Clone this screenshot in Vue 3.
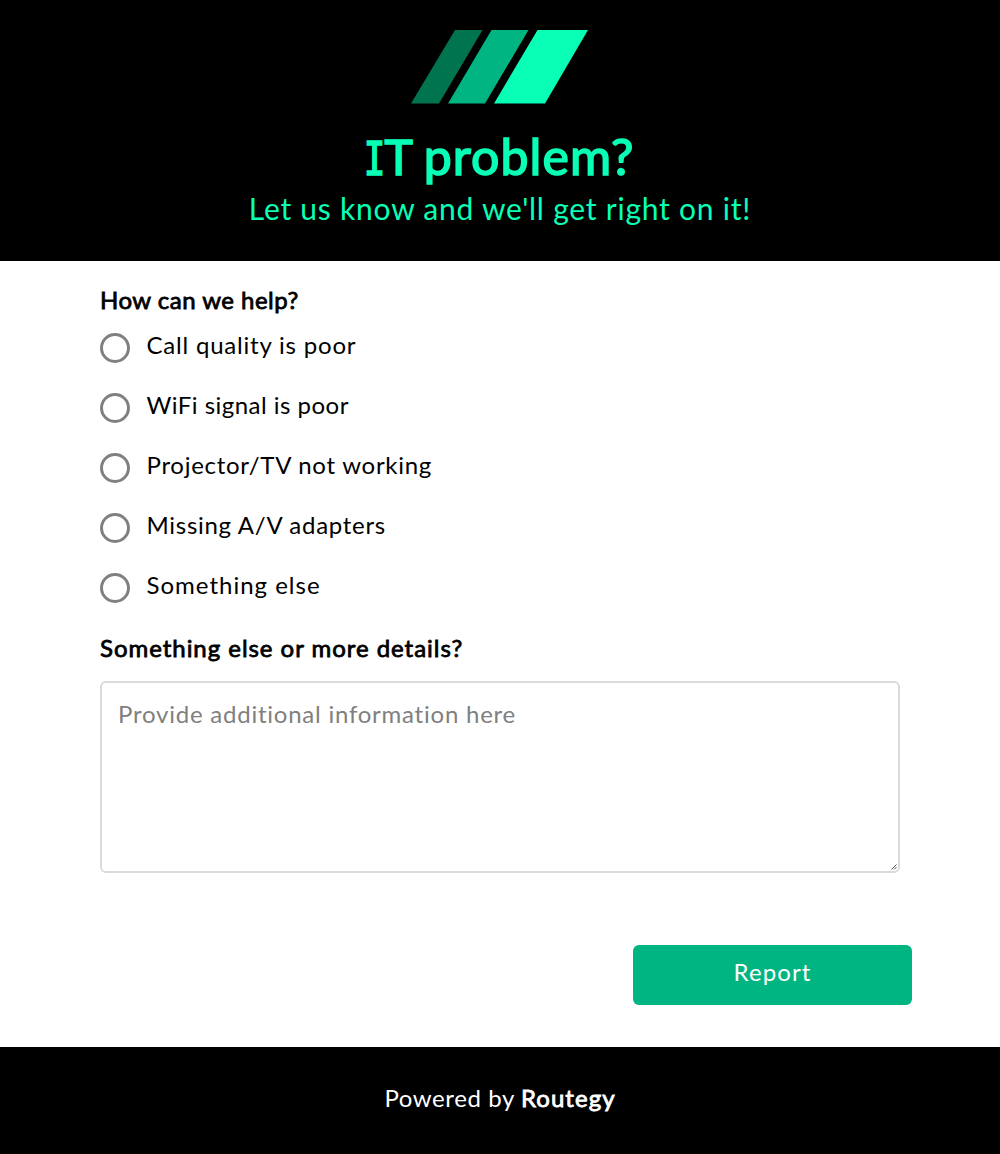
<script setup>
import { ref } from 'vue'

const options = [
  { label: 'Call quality is poor', spacing: 0.8 },
  { label: 'WiFi signal is poor', spacing: 0.48 },
  { label: 'Projector/TV not working', spacing: 0.72 },
  { label: 'Missing A/V adapters', spacing: 0.71 },
  { label: 'Something else', spacing: 1 },
]
const selected = ref('')
const details = ref('')
</script>

<template>
  <div class="page">
    <header class="header">
      <svg class="logo" width="178" height="74" viewBox="0 0 178 74">
        <path d="M44 0H71.500L28 73.500H0Z" fill="#00734f" />
        <path d="M80.500 0H117.500L74 73.500H37Z" fill="#00b582" />
        <path d="M126.500 0H177L134 73.500H83Z" fill="#08ffb5" />
      </svg>
      <h1 class="title"><span class="serif-i">I</span><span class="title-t">T&nbsp;</span><span class="title-rest">problem?</span></h1>
      <p class="subtitle">Let us know and we'll get right on it!</p>
    </header>
    <main class="form">
      <h2 class="question q1">How can we help?</h2>
      <div class="options">
        <label v-for="o in options" :key="o.label" class="option">
          <input v-model="selected" class="radio" type="radio" name="problem" :value="o.label" />
          <span class="option-text" :style="{ letterSpacing: o.spacing + 'px' }">{{ o.label }}</span>
        </label>
      </div>
      <h2 class="question q2">Something else or more details?</h2>
      <div class="details-box">
        <textarea v-model="details" class="details" placeholder="Provide additional information here"></textarea>
        <svg class="grip" width="6" height="6" viewBox="0 0 6 6">
          <path d="M0.500 5.500L5.500 0.500M3 5.500L5.500 3" stroke="#555" stroke-width="1" />
        </svg>
      </div>
      <button class="report" type="button">Report</button>
    </main>
    <footer class="footer"><span class="powered">Powered by</span><span class="brand">Routegy</span></footer>
  </div>
</template>

<style>
body { margin: 0; background: #fff; }
</style>

<style scoped>
.page {
  display: flex;
  flex-direction: column;
  height: 1154px;
  font-family: Lato, "Liberation Sans", sans-serif;
  font-size: 24px;
  line-height: 30px;
  color: #000;
  white-space: nowrap;
}
.header {
  box-sizing: border-box;
  display: flex;
  flex-direction: column;
  align-items: center;
  height: 261px;
  padding-top: 30px;
  background: #000;
  color: #08ffb5;
}
.logo { display: block; }
.title {
  height: 60px;
  margin: 22px 0 0;
  font-size: 48px;
  line-height: 60px;
  font-weight: 400;
  display: flex;
  align-items: baseline;
  -webkit-text-stroke: 1.600px currentColor;
}
.serif-i {
  width: 19px;
  display: flex;
  justify-content: center;
  font-family: "DejaVu Sans Mono", monospace;
  font-size: 46px;
  transform: scaleX(0.78);
}
.title-rest { font-size: 50px; letter-spacing: 1.100px; }
.subtitle {
  margin: 2px 0 0;
  font-size: 30px;
  line-height: 40px;
  letter-spacing: 0.770px;
}
.form {
  box-sizing: border-box;
  height: 786px;
  padding: 24px 88px 0 100px;
  display: flex;
  flex-direction: column;
  align-items: flex-start;
}
.question {
  margin: 0;
  font-size: 24px;
  line-height: 30px;
  font-weight: 400;
  -webkit-text-stroke: 0.800px currentColor;
}
.q1 { letter-spacing: 0.480px; }
.q2 { letter-spacing: 0.960px; }
.options {
  display: flex;
  flex-direction: column;
  gap: 30px;
  margin: 18px 0 30px;
}
.option { display: flex; gap: 16.500px; height: 30px; }
.radio {
  appearance: none;
  box-sizing: border-box;
  width: 30px;
  height: 30px;
  margin: 0;
  border: 3px solid #808080;
  border-radius: 50%;
  background: #fff;
}
.radio:checked { box-shadow: inset 0 0 0 5px #fff; background: #00b582; }
.option-text { margin-top: -3px; }
.details-box { position: relative; margin-top: 18px; height: 192px; }
.details {
  display: block;
  box-sizing: border-box;
  width: 800px;
  height: 192px;
  margin: 0;
  padding: 16px;
  border: 2px solid #dadada;
  border-radius: 6px;
  font: inherit;
  letter-spacing: 0.770px;
  outline: none;
  resize: none;
}
.details::placeholder { color: #808080; }
.grip { position: absolute; right: 3px; bottom: 3px; }
.report {
  align-self: flex-end;
  width: 279px;
  height: 60px;
  margin: 72px 0 0;
  padding: 0 0 6px;
  border: 0;
  border-radius: 6px;
  background: #00b582;
  color: #fff;
  font: inherit;
  letter-spacing: 1.100px;
}
.footer {
  box-sizing: border-box;
  height: 107px;
  padding-top: 36px;
  display: flex;
  justify-content: center;
  gap: 6px;
  background: #000;
  color: #fff;
}
.powered { letter-spacing: 0.600px; }
.brand { letter-spacing: 1.050px; -webkit-text-stroke: 0.800px currentColor; }
</style>
